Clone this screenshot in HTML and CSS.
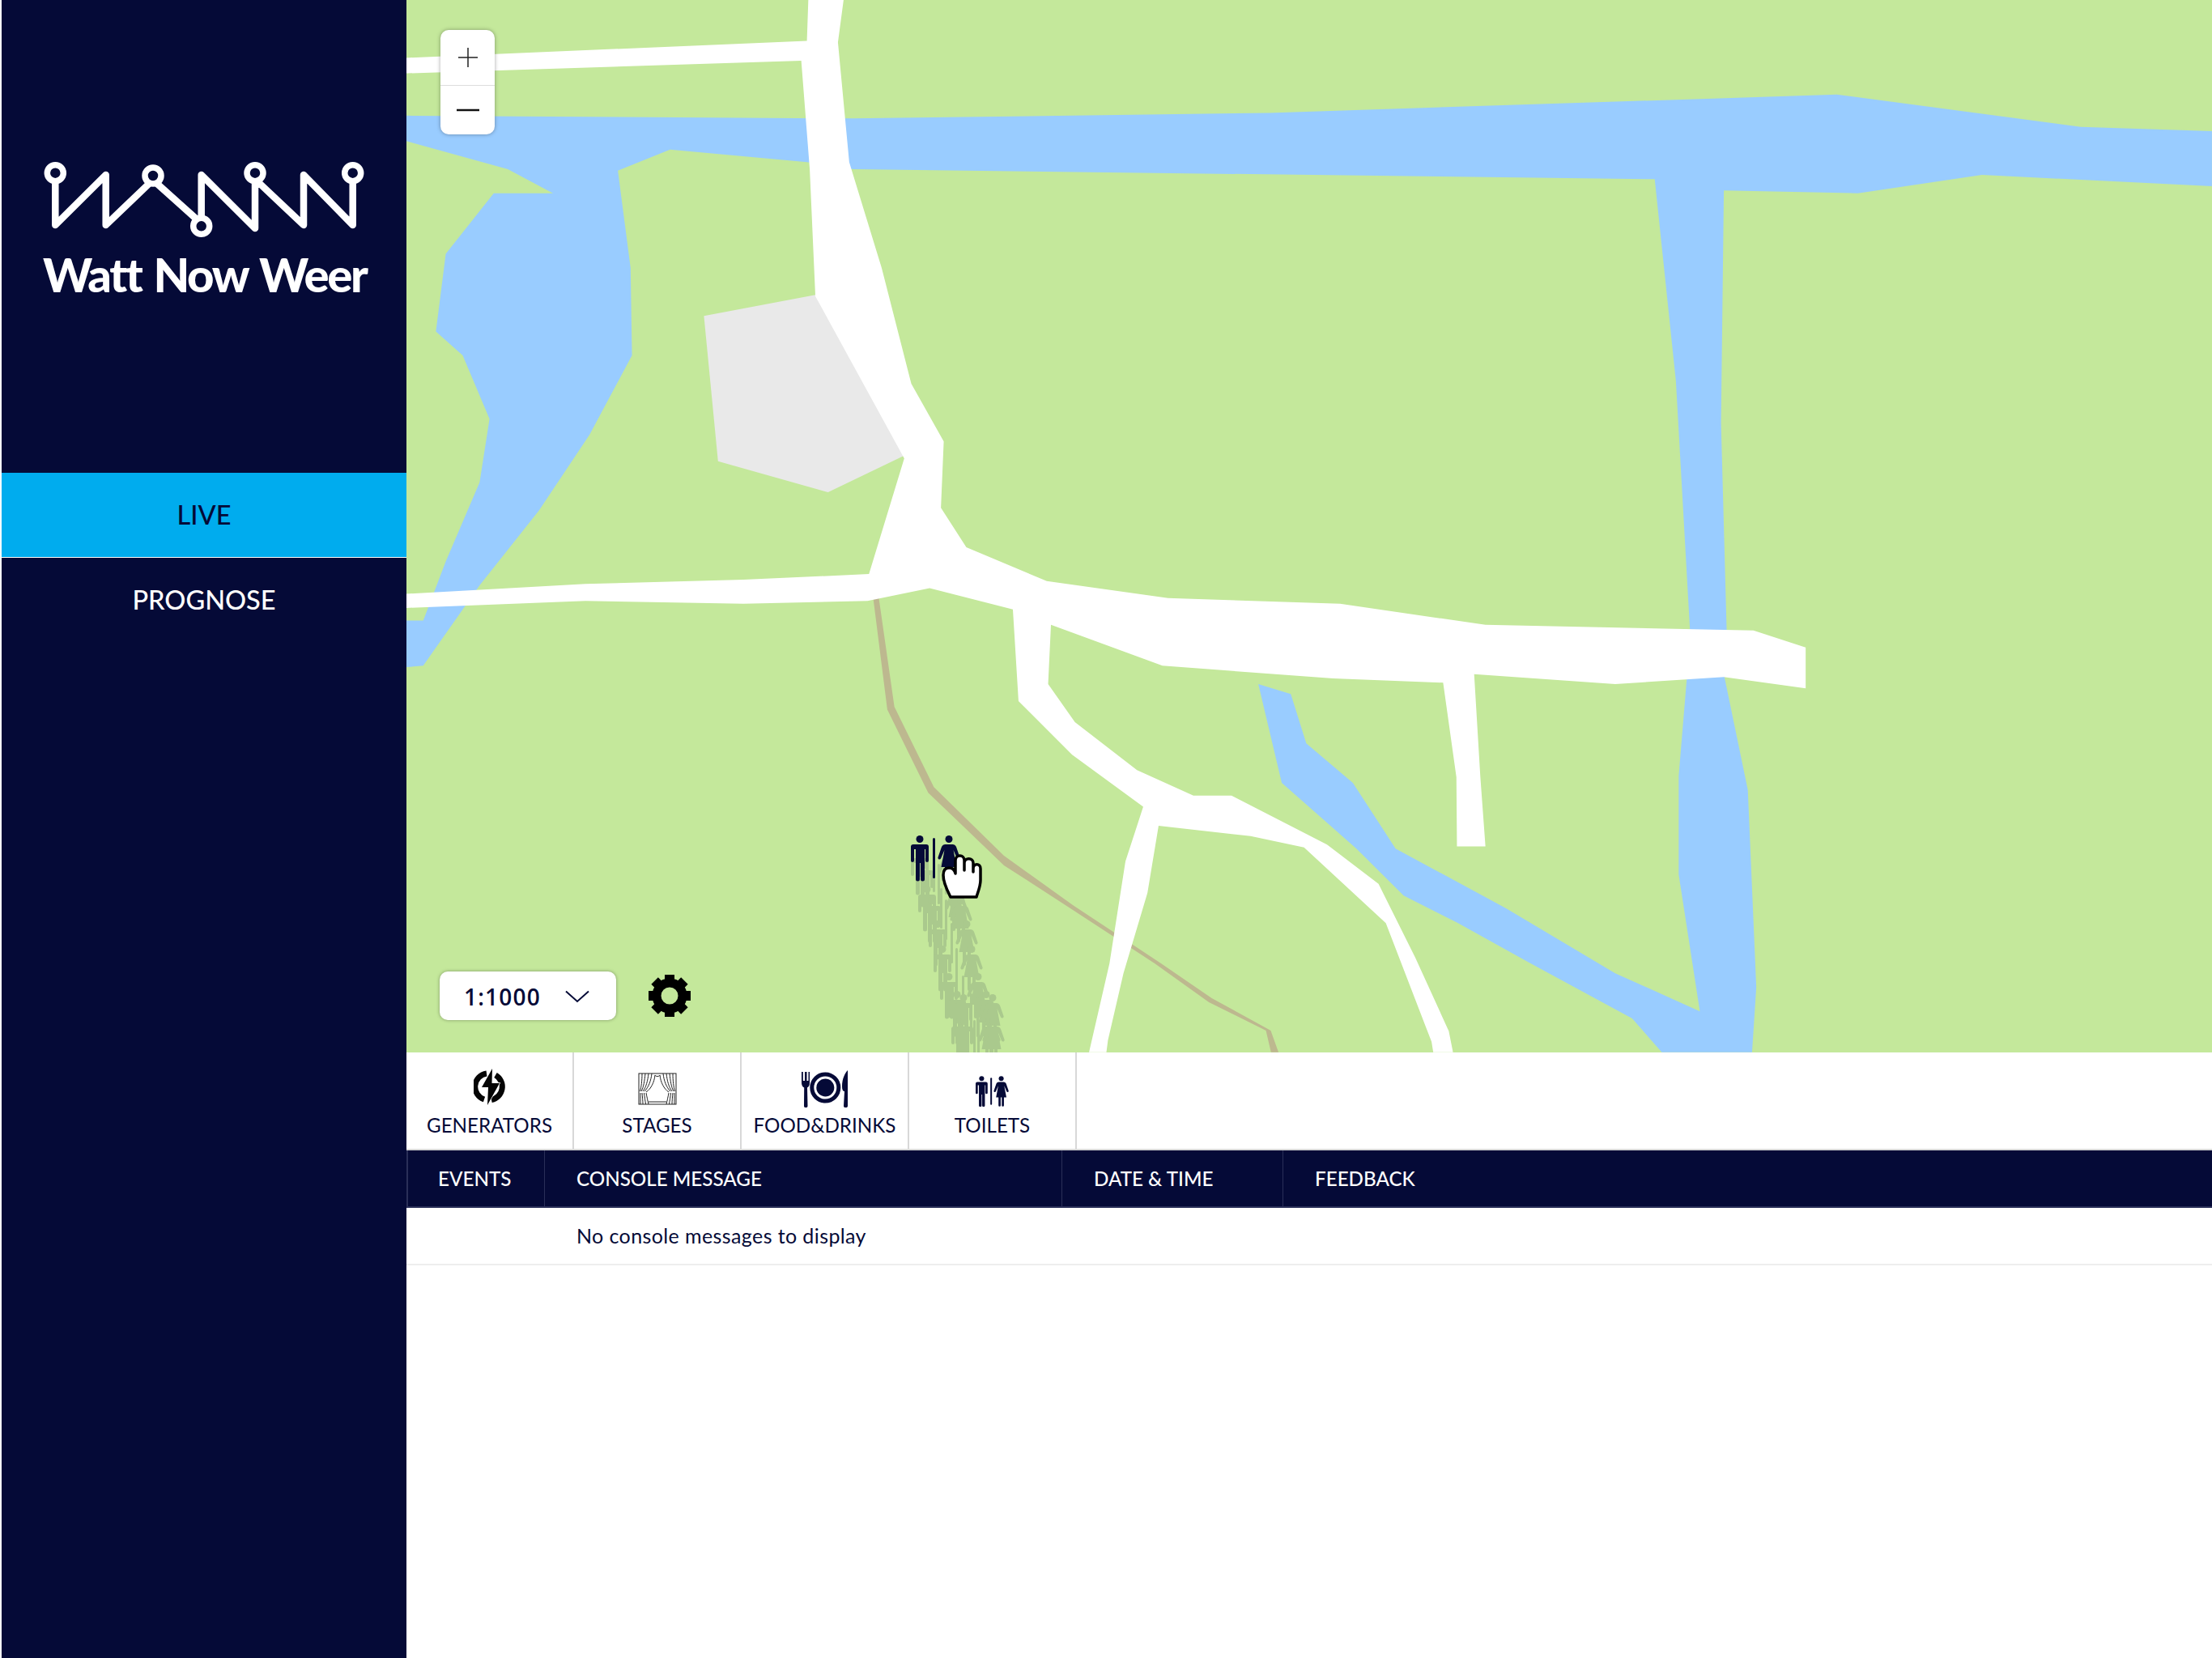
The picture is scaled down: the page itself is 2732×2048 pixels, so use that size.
FILE: index.html
```html
<!DOCTYPE html>
<html lang="nl">
<head>
    <meta charset="UTF-8">
    <title>Watt Now Weer</title>
    <link rel="stylesheet" href="styles.css">
</head>
<body>

    <!-- Sidebar -->
    <aside class="sidebar">
        <div class="logo">
            <svg class="logo-mark" viewBox="50 195 404 100">
                <g fill="none" stroke="#fff" stroke-width="8.500" stroke-linecap="round" stroke-linejoin="round">
                    <path d="M68.3 224V277L130.7 215V277L185 225M193 225L248.7 275V215L315 281V225M320 225L375 277V215L435.7 277V224"/>
                </g>
                <g fill="#050a37" stroke="#fff" stroke-width="7.500">
                    <circle cx="68.3" cy="212.7" r="10"/>
                    <circle cx="189" cy="216" r="10"/>
                    <circle cx="248.7" cy="278.3" r="10"/>
                    <circle cx="315" cy="212.7" r="10"/>
                    <circle cx="435.7" cy="212.7" r="10"/>
                </g>
            </svg>
            <div class="logo-text">Watt Now Weer</div>
        </div>
        <nav class="side-nav">
            <a class="side-link active">LIVE</a>
            <a class="side-link">PROGNOSE</a>
        </nav>
    </aside>

    <main class="content">
        <!-- Map -->
        <div class="map">
            <svg class="map-svg" viewBox="502 0 2230 1300">
                <defs>
                    <g id="wc">
                        <circle cx="11" cy="4.5" r="4.5"/>
                        <path d="M3 11h16a3 3 0 0 1 3 3v17a2 2 0 0 1-4 0V17h-1v37a2.5 2.5 0 0 1-5 0V34h-1v20a2.5 2.5 0 0 1-5 0V17H4v14a2 2 0 0 1-4 0V14a3 3 0 0 1 3-3z"/>
                        <rect x="27" y="3" width="3" height="50" rx="1.5"/>
                        <circle cx="47" cy="4.5" r="4.5"/>
                        <path d="M42.500 11h9c2 0 3.500 1 4.500 3l4.500 13c.7 2.500-2.500 3.500-3.500 1.500L52.500 18l4 21H52v15a2 2 0 0 1-4 0V39h-2v15a2 2 0 0 1-4 0V39h-4.500l4-21-4.500 10.500c-1 2-4.200 1-3.500-1.500L38 14c1-2 2.500-3 4.500-3z"/>
                    </g>
                </defs>
                <rect x="502" y="0" width="2230" height="1300" fill="#c4e89b"/>
                <g transform="scale(1.7423)">
                    <!-- water -->
                    <polygon fill="#99ccff" points="288,82 605,84 900,80 1302,67 1475,90 1568,93 1568,132 1405,124 1317,137 1222,135 1220,300 1224,447 1198,447 1188,270 1173,127 605,120 572,115 475,106 438,121 447,190 448,252 418,308 382,362 340,415 300,472 288,473 288,440 300,440 316,398 340,342 347,297 328,252 309,235 316,180 350,137 392,137 360,120 288,100"/>
                    <polygon fill="#99ccff" points="1196,478 1222,478 1239,560 1245,700 1242,746 1178,746 1157,722 1085,683 1032.800,654 995,635 961.500,601.600 908.600,555 892,485 915,492 926,527 959,555 989.300,601.600 1067.600,644 1145,690 1205,717 1190,620 1190,550"/>
                    <polygon fill="#e9e9e9" points="499,224 578,209 641,323 587,349 509,327"/>
                    <polygon fill="#bdb88f" points="619,424 623,424 634,501 662,558 711.700,606.700 760.500,641.700 823,683 859,707.700 900.800,730.600 906.300,746 901,746 897.400,730.600 857,710.500 818.500,683 757,642.800 711.700,613.500 658,562 629,503"/>
                    <!-- roads -->
                    <polygon fill="#fff" points="288,41 572,29 573,0 598,0 594,30 602,115 625,190 646,272 669,313 667,360 685,388 742,412 828,424 950,428 1053,443 1243,447 1280,459 1280,488 1222,480 1145,485 1045,478 1049.400,551 1053,600 1032.800,600 1032.400,551 1023,484 945,481 824,472 745,443 743,485 762,512 806,546 846,564 873,564 940.700,598.800 977.200,626.600 1003.300,679 1027,731 1030,746 1016,746 1014.800,738.600 982.400,654.500 924.400,600.800 886.500,592.800 821.300,585.400 813.400,633 796.400,690 785.400,737.500 784.300,746 772,746 786.500,683 797.800,610.700 810.400,572 760,535 722,497 718,432 659,417 615,426 527,428 415,426 288,431 288,421 415,414 527,411 616,407 641,325 578,210 574,120 568,43 288,52"/>
                </g>
                <!-- dragged marker trail -->
                <g fill="#aac98d" transform="translate(1125 1032)">
                    <use href="#wc" x="0" y="17"/>
                    <use href="#wc" x="6" y="32"/>
                    <use href="#wc" x="9" y="62"/>
                    <use href="#wc" x="15" y="76"/>
                    <use href="#wc" x="22" y="105"/>
                    <use href="#wc" x="28" y="136"/>
                    <use href="#wc" x="36" y="170"/>
                    <use href="#wc" x="46" y="192"/>
                    <use href="#wc" x="54" y="196"/>
                    <use href="#wc" x="50" y="225"/>
                    <use href="#wc" x="55" y="225"/>
                </g>
                <use href="#wc" x="1125" y="1032" fill="#050a37"/>
                <path transform="translate(1163 1055)" fill="#fff" stroke="#000" stroke-width="3.500" stroke-linejoin="round" d="M11 53C7 45 2 36 2 26 2 19 5 17 9 17 13 17 16 19 17 24V8C17 0 28 0 28 8V20 11C28 4 39 4 39 11V22 18C39 11 48 11 48 18V32C48 40 45 46 43 53Z"/>
            </svg>

            <div class="zoom-box">
                <button class="zoom-btn zoom-in">
                    <svg width="26" height="26" viewBox="0 0 26 26"><path d="M13 1V25M1 13H25" stroke="#222" stroke-width="1.500" fill="none"/></svg>
                </button>
                <button class="zoom-btn zoom-out">
                    <svg width="28" height="4" viewBox="0 0 28 4"><path d="M0 2H28" stroke="#111" stroke-width="2.500" fill="none"/></svg>
                </button>
            </div>

            <div class="scale-row">
                <div class="scale-select">
                    <span>1:1000</span>
                    <svg width="30" height="16" viewBox="0 0 30 16"><path d="M1 1.500L15 14 29 1.500" stroke="#050a37" stroke-width="2" fill="none"/></svg>
                </div>
                <svg class="gear" width="52" height="52" viewBox="-26 -26 52 52">
                    <circle r="16" fill="none" stroke="#000" stroke-width="11"/>
                    <g fill="#000">
                        <rect x="-6" y="-26" width="12" height="10"/>
                        <rect x="-6" y="-26" width="12" height="10" transform="rotate(45)"/>
                        <rect x="-6" y="-26" width="12" height="10" transform="rotate(90)"/>
                        <rect x="-6" y="-26" width="12" height="10" transform="rotate(135)"/>
                        <rect x="-6" y="-26" width="12" height="10" transform="rotate(180)"/>
                        <rect x="-6" y="-26" width="12" height="10" transform="rotate(225)"/>
                        <rect x="-6" y="-26" width="12" height="10" transform="rotate(270)"/>
                        <rect x="-6" y="-26" width="12" height="10" transform="rotate(315)"/>
                    </g>
                </svg>
            </div>
        </div>

        <!-- Asset tabs -->
        <div class="tabs">
            <div class="tab">
                <svg class="tab-icon icon-up" width="40" height="45" viewBox="0 0 40 45">
                    <path d="M16 6A16.500 16.500 0 0 0 13 38" fill="none" stroke="#050505" stroke-width="7"/>
                    <path d="M27 8A16.500 16.500 0 0 1 22 38.500" fill="none" stroke="#050505" stroke-width="7"/>
                    <path d="M23 0L10 23H18L17 45L32 18H22.500Z" fill="#050505" stroke="#fff" stroke-width="1.500" paint-order="stroke"/>
                </svg>
                <span>GENERATORS</span>
            </div>
            <div class="tab">
                <svg class="tab-icon icon-up" width="48" height="40" viewBox="0 0 48 40">
                    <g fill="none" stroke="#222" stroke-width="1">
                        <rect x="1" y="1" width="46" height="38"/>
                        <path d="M21 3C20 12 16 20 10 24M17 1C16 10 13 18 8 23M13 1C12 10 10 18 6 23M9 1C8 10 7 18 4 23M5 1C5 10 4 18 2.500 23"/>
                        <path d="M27 3C28 12 32 20 38 24M31 1C32 10 35 18 40 23M35 1C36 10 38 18 42 23M39 1C40 10 41 18 44 23M43 1C43 10 44 18 45.500 23"/>
                        <path d="M10 25C11 30 12 35 13 39M7.500 25C8 30 9 35 9.500 39M5 25C5.500 30 6 35 6 39M3 25C3 30 3 35 3 39"/>
                        <path d="M38 25C37 30 36 35 35 39M40.500 25C40 30 39 35 38.500 39M43 25C42.500 30 42 35 42 39M45 25C45 30 45 35 45 39"/>
                        <path d="M13 36H35M21 3C22 5 26 5 27 3"/>
                    </g>
                </svg>
                <span>STAGES</span>
            </div>
            <div class="tab">
                <svg class="tab-icon" width="58" height="46" viewBox="0 0 58 46">
                    <path d="M0 2V15C0 19 1.500 20.500 3.200 21.500L3 44C3 47 7.500 47 7.500 44L7 21.500C8.700 20.500 10 19 10 15V2H8.500V13H6.500V2H4V13H1.800V2Z" fill="#050a37"/>
                    <circle cx="29.300" cy="21.500" r="16.500" fill="none" stroke="#050a37" stroke-width="5"/>
                    <circle cx="29.300" cy="21.500" r="11" fill="#050a37"/>
                    <path d="M57 0V44C57 47 52 47 52 44L53 26C51 26 50 24 50 20 50 10 54 3 57 0Z" fill="#050a37"/>
                </svg>
                <span>FOOD&amp;DRINKS</span>
            </div>
            <div class="tab">
                <svg class="tab-icon icon-wc" width="41" height="38" viewBox="0 0 61 56">
                    <use href="#wc" fill="#050a37"/>
                </svg>
                <span>TOILETS</span>
            </div>
        </div>

        <!-- Console table -->
        <div class="console-head">
            <div class="col col-events">EVENTS</div>
            <div class="col col-message">CONSOLE MESSAGE</div>
            <div class="col col-date">DATE &amp; TIME</div>
            <div class="col col-feedback">FEEDBACK</div>
        </div>
        <div class="console-row">No console messages to display</div>
    </main>

</body>
</html>
```

FILE: styles.css
```css
body {
    margin: 0;
    padding-left: 2px;
    height: 2048px;
    display: flex;
    background-color: #fff;
    color: #050a37;
    font-family: "Lato", "Open Sans", sans-serif;
    overflow: hidden;
}

/* Sidebar */
.sidebar {
    width: 500px;
    flex: none;
    background-color: #050a37;
    padding-top: 196px;
    box-sizing: border-box;
}

.logo {
    height: 388px;
    box-sizing: border-box;
}

.logo-mark {
    display: block;
    width: 404px;
    height: 100px;
    margin-left: 48px;
}

.logo-text {
    margin-top: 13px;
    margin-left: 51px;
    font-size: 58px;
    font-weight: 900;
    letter-spacing: -2.300px;
    word-spacing: 3.500px;
    line-height: 60px;
    color: #fff;
    white-space: nowrap;
}

.side-link {
    display: block;
    height: 104px;
    line-height: 104px;
    margin-bottom: 1px;
    text-align: center;
    font-size: 32.500px;
    font-weight: 500;
    color: #fff;
}

.side-link.active {
    background-color: #00acee;
    color: #050a37;
    border-bottom: 1px solid #fff;
    margin-bottom: 0;
}

/* Map */
.content {
    flex: 1;
    min-width: 0;
}

.map {
    position: relative;
    height: 1300px;
    overflow: hidden;
}

.map-svg {
    display: block;
    width: 2230px;
    height: 1300px;
}

.zoom-box {
    position: absolute;
    left: 42px;
    top: 37px;
    width: 67px;
    height: 129px;
    background-color: #fff;
    border-radius: 10px;
    box-shadow: 0 0 5px rgba(0, 0, 0, 0.35);
    display: flex;
    flex-direction: column;
}

.zoom-btn {
    padding: 0;
    border: none;
    background: none;
    display: flex;
    align-items: center;
    justify-content: center;
}

.zoom-in {
    height: 68px;
}

.zoom-out {
    height: 61px;
    border-top: 1px solid #ddd;
}

.scale-row {
    position: absolute;
    left: 41px;
    top: 1200px;
    display: flex;
    align-items: center;
    gap: 40px;
}

.scale-select {
    width: 218px;
    height: 60px;
    box-sizing: border-box;
    padding: 2px 33px 0 30px;
    display: flex;
    align-items: center;
    justify-content: space-between;
    background-color: #fff;
    border-radius: 10px;
    box-shadow: 0 0 4px rgba(0, 0, 0, 0.35);
    font-family: "Open Sans", sans-serif;
    font-size: 28px;
    font-weight: 600;
    letter-spacing: 1.200px;
}

/* Tabs */
.tabs {
    display: flex;
    height: 119px;
    border-bottom: 2px solid #d8d8d8;
}

.tab {
    width: 205px;
    border-right: 2px solid #d8d8d8;
    display: flex;
    flex-direction: column;
    align-items: center;
    justify-content: flex-end;
    padding-bottom: 14px;
    font-size: 24.200px;
    line-height: 30px;
    gap: 7px;
    white-space: nowrap;
}

.icon-up {
    margin-bottom: 3px;
}

.icon-wc {
    margin-bottom: 1px;
}

/* Console table */
.console-head {
    display: flex;
    height: 69px;
    background-color: #050a37;
    border-bottom: 2px solid #2a2f58;
    border-left: 2px solid #2a2f58;
    color: #fff;
    font-size: 24.200px;
    font-weight: 500;
}

.col {
    line-height: 69px;
    padding-left: 37px;
    box-sizing: border-box;
    border-right: 1px solid #2a2f58;
}

.col-events {
    width: 169px;
}

.col-message {
    width: 639px;
    padding-left: 39px;
}

.col-date {
    width: 273px;
    padding-left: 39px;
}

.col-feedback {
    flex: 1;
    border-right: none;
    padding-left: 39px;
}

.console-row {
    height: 69px;
    line-height: 69px;
    padding-left: 210px;
    border-bottom: 2px solid #eee;
    font-size: 25px;
    letter-spacing: 0.400px;
}
```
